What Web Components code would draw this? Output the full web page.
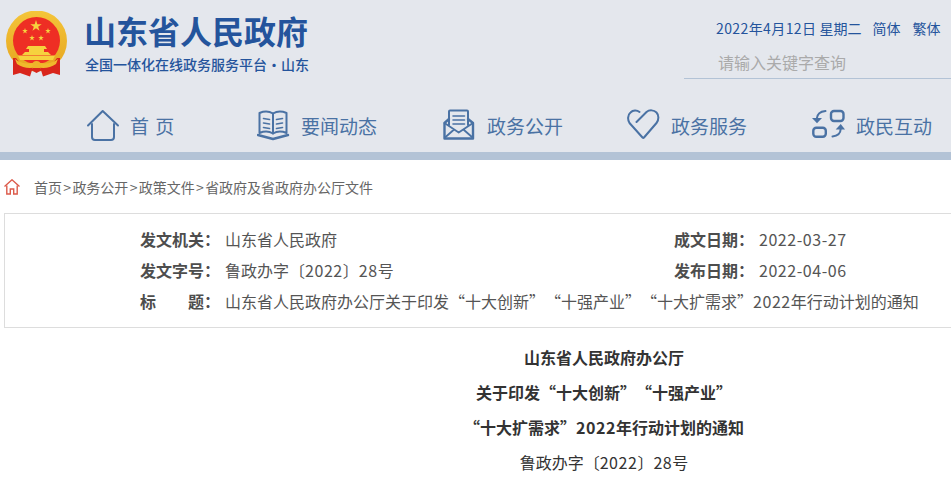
<!DOCTYPE html>
<html lang="zh">
<head>
<meta charset="utf-8">
<title>山东省人民政府</title>
<style>
  html, body { margin: 0; padding: 0; overflow: hidden; background: #fff; }
  body { font-family: "Noto Sans CJK SC", "Liberation Sans", sans-serif; text-spacing-trim: space-all; }
  .n { letter-spacing: .55px; }
</style>
</head>
<body>
<sd-header></sd-header>
<sd-crumb>首页<i>&gt;</i>政务公开<i>&gt;</i>政策文件<i>&gt;</i>省政府及省政府办公厅文件</sd-crumb>
<sd-meta></sd-meta>
<sd-article>
  <b>山东省人民政府办公厅</b>
  <b>关于印发“十大创新”“十强产业”</b>
  <b>“十大扩需求”<span class="n">2022</span>年行动计划的通知</b>
  <span>鲁政办字〔<span class="n">2022</span>〕<span class="n">28</span>号</span>
</sd-article>

<script>
const CJK = `"Noto Sans CJK SC", "Liberation Sans", sans-serif`;

const EMBLEM = `
<svg width="62" height="66" viewBox="0 0 62 66" aria-hidden="true" style="margin-top:3px;flex:none">
  <defs>
    <linearGradient id="gold" x1="0" y1="0" x2="0" y2="1">
      <stop offset="0" stop-color="#f4c53a"/><stop offset="1" stop-color="#e6a51f"/>
    </linearGradient>
    <polygon id="st" points="0,-1 .225,-.31 .95,-.31 .36,.12 .59,.81 0,.38 -.59,.81 -.36,.12 -.95,-.31 -.225,-.31"/>
  </defs>
  <circle cx="30.5" cy="30" r="30.5" fill="url(#gold)"/>
  <circle cx="30.5" cy="29.5" r="23.5" fill="#ee2e24"/>
  <g fill="#f6d23e">
    <use href="#st" transform="translate(30 15) scale(6)"/>
    <use href="#st" transform="translate(19 20) scale(3)"/>
    <use href="#st" transform="translate(42 20) scale(3)"/>
    <use href="#st" transform="translate(26 27) scale(3)"/>
    <use href="#st" transform="translate(35 27) scale(3)"/>
    <path d="M22 35 H39 L41 38 H38 V41 H42 L45 44 H16 L19 41 H23 V38 H20 Z"/>
    <path d="M12 44.5 H49 L47 49 H14 Z"/>
  </g>
  <path d="M7 47 L7 64 L14 62 L24 65.5 L27 56 Q15 55 10 47 Z" fill="#d9261c"/>
  <path d="M54 47 L54 64 L47 62 L37 65.5 L34 56 Q46 55 51 47 Z" fill="#d9261c"/>
  <path d="M9 48 Q18 55 30.5 51 Q43 55 52 48 L50 53 Q41 59 30.5 56 Q20 59 11 53 Z" fill="#f0b92c"/>
  <circle cx="30.5" cy="54" r="4" fill="#eeb32a"/>
  <path d="M25 59 L30.5 62 L36 59 L34 57 H27 Z" fill="#d9261c"/>
</svg>`;

const ICONS = {
  home: `<path d="M2 16.5 L16.7 2 L32 16.5"/><path d="M6 15 V28 a3 3 0 0 0 3 3 H25 a3 3 0 0 0 3 -3 V15"/>`,
  book: `<path d="M2.5 4 Q10 1 16 4.5 Q22 1 29.5 4 V24 Q22 21 16 24.5 Q10 21 2.5 24 Z"/><path d="M16 4.5 V24.5"/>
         <path d="M1 26 L16 30 L31 26" stroke-width="2.4"/>
         <path d="M6.5 9.5 L12.5 10.5 M6.5 14 L12.5 15 M6.5 18.5 L12.5 19.5 M19.5 10.5 L25.5 9.5 M19.5 15 L25.5 14 M19.5 19.5 L25.5 18.5" stroke-width="1.6"/>`,
  mail: `<path d="M6 16 V2.5 Q6 1.5 7 1.5 H24 Q25 1.5 25 2.5 V16"/><path d="M10 7 H21.5 M10 11 H21.5 M10 15 H21.5" stroke-width="1.6"/>
         <path d="M6 10 L1.5 14 V29.5 H30 V14 L25 10" stroke-width="2.4"/><path d="M1.5 14 L15.7 23.5 L30 14 M2 28.5 L10.5 21 M29.5 28.5 L21 21" stroke-width="1.8"/>`,
  heart: `<path d="M9.5 13 L19.5 3 C22.5 .5 27 1 29.5 3.5 C32 6 32 11 29.5 14 L17 28.5 Q16.3 29.5 15.5 28.5 L2.5 14 C.5 11 .5 6 3.5 3.5 C6 1 10 1 12.5 3"/>`,
  swap: `<g stroke-width="2.4"><rect x="19" y="2" width="12.5" height="10" rx="3"/><rect x="1.3" y="18.7" width="12.5" height="9" rx="3"/></g>
         <path d="M13.5 2 C8 2.5 5 5.5 4.7 10"/><path d="M0 9 H10 L5 14.2 Z" fill="#4a72a4" stroke="none"/>
         <path d="M20.5 27.5 C25 27 28.5 25 28.7 20"/><path d="M23.7 20.5 H33 L28.7 15 Z" fill="#4a72a4" stroke="none"/>`
};

class SdHeader extends HTMLElement {
  constructor() {
    super();
    this.attachShadow({ mode: "open" });
  }
  connectedCallback() {
    const nav = [
      ["home", "首 页", 171],
      ["book", "要闻动态", 186],
      ["mail", "政务公开", 184],
      ["heart", "政务服务", 185],
      ["swap", "政民互动", 139]
    ];
    this.shadowRoot.innerHTML = `
    <style>
      :host { display: block; width: 951px; background: #e4e7ed; border-bottom: 8px solid #b3c3d6; font-family: ${CJK}; }
      .top { height: 109px; display: flex; justify-content: space-between; }
      .logo { display: flex; padding: 8px 0 0 6px; }
      .names { margin-left: 16px; color: #24549c; font-weight: 700; }
      .names h1 { margin: 0; font-size: 32px; line-height: 44px; height: 44px; font-weight: 700; white-space: nowrap; }
      .names p { margin: 2px 0 0 1px; font-size: 14px; line-height: 20px; font-weight: 500; white-space: nowrap; }
      .side { width: 267px; padding-top: 18px; box-sizing: border-box; color: #24549c; }
      .date { display: flex; font-size: 14px; line-height: 20px; padding-left: 32px; white-space: nowrap; }
      .date em { font-style: normal; letter-spacing: .4px; margin-right: 3px; }
      .date span:nth-child(2) { margin-left: 11px; }
      .date span:nth-child(3) { margin-left: 12px; }
      .search { margin-top: 13px; height: 27px; padding-left: 34px; border-bottom: 1px solid #b3c3d6; color: #aaa; font-size: 16px; line-height: 22px; }
      nav { height: 43px; display: flex; padding-left: 86px; }
    </style>
    <div class="top">
      <div class="logo">
        ${EMBLEM}
        <div class="names">
          <h1>山东省人民政府</h1>
          <p>全国一体化在线政务服务平台·山东</p>
        </div>
      </div>
      <div class="side">
        <div class="date"><span><em>2022年4月12日</em>星期二</span><span>简体</span><span>繁体</span></div>
        <div class="search">请输入关键字查询</div>
      </div>
    </div>
    <nav>${nav.map(n => `<sd-nav-item icon="${n[0]}" style="width:${n[2]}px">${n[1]}</sd-nav-item>`).join("")}</nav>`;
  }
}

class SdNavItem extends HTMLElement {
  constructor() {
    super();
    this.attachShadow({ mode: "open" });
  }
  connectedCallback() {
    this.shadowRoot.innerHTML = `
    <style>
      :host { display: flex; align-items: flex-start; flex: none; color: #4a72a4; font-size: 19px; line-height: 34px; white-space: pre; word-spacing: 2px; }
      svg { width: 34px; height: 33px; margin-right: 10px; flex: none; fill: none; stroke: #4a72a4; stroke-width: 2; stroke-linecap: round; stroke-linejoin: round; }
    </style>
    <svg viewBox="0 0 34 33">${ICONS[this.getAttribute("icon")]}</svg>
    <span><slot></slot></span>`;
  }
}

class SdCrumb extends HTMLElement {
  constructor() {
    super();
    this.attachShadow({ mode: "open" });
  }
  connectedCallback() {
    this.shadowRoot.innerHTML = `
    <style>
      :host { display: flex; align-items: center; height: 53px; padding-left: 4px; color: #666; font-size: 14px; font-family: ${CJK}; white-space: nowrap; }
      svg { width: 16px; height: 16px; margin-right: 14px; fill: none; stroke: #dc5a4a; stroke-width: 1.4; }
      ::slotted(i) { font-style: normal; padding: 0 1.3px; }
    </style>
    <svg viewBox="0 0 16 16"><path d="M.5 7.5 L8 .8 L15.5 7.5"/><path d="M2.8 6.5 V15 H6.3 V10 H9.7 V15 H13.2 V6.5"/></svg>
    <span><slot></slot></span>`;
  }
}

class SdMeta extends HTMLElement {
  constructor() {
    super();
    this.attachShadow({ mode: "open" });
  }
  connectedCallback() {
    this.shadowRoot.innerHTML = `
    <style>
      :host { display: block; box-sizing: border-box; width: 1200px; height: 115px; margin-left: 4px; padding: 10px 0 0 135px; border: 1px solid #ddd; font-family: ${CJK}; font-size: 16px; line-height: 31px; color: #555; white-space: nowrap; }
      .row { display: flex; }
      b { display: block; width: 85px; flex: none; color: #4d4d4d; font-weight: 700; }
      .cell { display: flex; }
      .cell:first-child { width: 534px; }
      .title { display: flex; justify-content: space-between; box-sizing: border-box; padding-right: 5px; }
      .title i { font-style: normal; }
      .n { letter-spacing: .55px; }
    </style>
    <div class="row">
      <div class="cell"><b>发文机关：</b><span>山东省人民政府</span></div>
      <div class="cell"><b>成文日期：</b><span class="n">2022-03-27</span></div>
    </div>
    <div class="row">
      <div class="cell"><b>发文字号：</b><span>鲁政办字〔<span class="n">2022</span>〕<span class="n">28</span>号</span></div>
      <div class="cell"><b>发布日期：</b><span class="n">2022-04-06</span></div>
    </div>
    <div class="row">
      <b class="title"><i>标</i><i>题：</i></b>
      <span>山东省人民政府办公厅关于印发“十大创新”“十强产业”“十大扩需求”<span class="n">2022</span>年行动计划的通知</span>
    </div>`;
  }
}

class SdArticle extends HTMLElement {
  constructor() {
    super();
    this.attachShadow({ mode: "open" });
  }
  connectedCallback() {
    this.shadowRoot.innerHTML = `
    <style>
      :host { display: block; width: 1200px; margin: 12px 0 0 4px; font-family: ${CJK}; font-size: 16px; line-height: 35px; color: #333; text-align: center; }
      ::slotted(*) { display: block; }
      ::slotted(b) { font-weight: 700; }
    </style>
    <slot></slot>`;
  }
}

customElements.define("sd-header", SdHeader);
customElements.define("sd-nav-item", SdNavItem);
customElements.define("sd-crumb", SdCrumb);
customElements.define("sd-meta", SdMeta);
customElements.define("sd-article", SdArticle);
</script>
</body>
</html>
